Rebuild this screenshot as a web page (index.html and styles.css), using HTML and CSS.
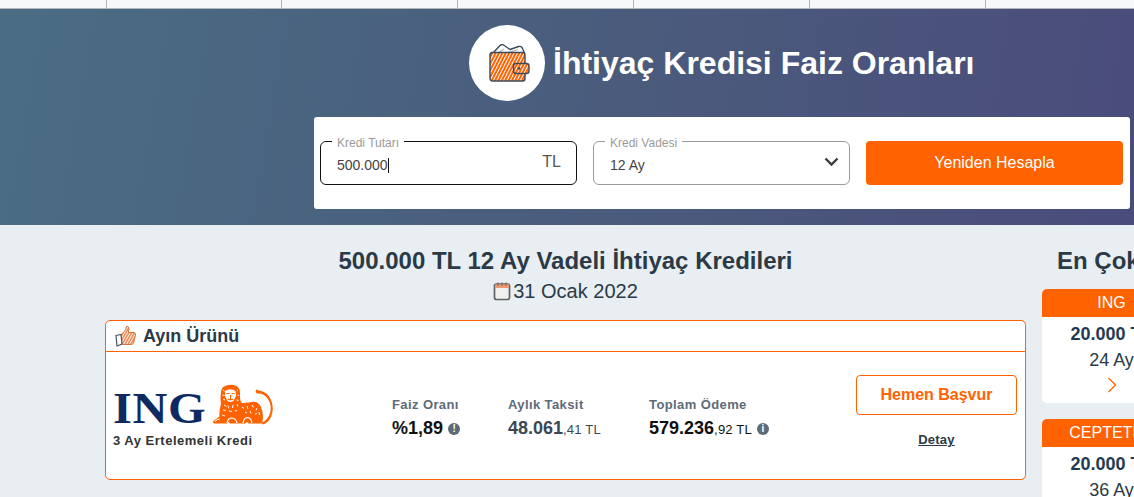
FILE: index.html
```html
<!DOCTYPE html>
<html lang="tr">
<head>
<meta charset="utf-8">
<title>İhtiyaç Kredisi Faiz Oranları</title>
<link rel="stylesheet" href="styles.css">
</head>
<body>
<nav class="topnav">
  <div class="nav-first"></div>
  <div class="nav-cell"></div>
  <div class="nav-cell"></div>
  <div class="nav-cell"></div>
  <div class="nav-cell"></div>
  <div class="nav-cell"></div>
  <div class="nav-cell"></div>
</nav>
<header class="hero">
  <div class="hero-title">
    <div class="hero-circle">
      <svg width="41" height="38" viewBox="0 0 41 38">
        <defs>
          <pattern id="stripes" width="3" height="3" patternUnits="userSpaceOnUse" patternTransform="rotate(27)">
            <rect width="3" height="3" fill="#fff"/>
            <rect width="2" height="3" fill="#ff6200"/>
          </pattern>
        </defs>
        <path d="M4 9 11 1.500q2-1.500 3.500-.5L21 5.500 29.500 2.500q2.500-.5 3.500 1L35.500 9Z" fill="#fff" stroke="#3e4a55" stroke-width="1.400" stroke-linejoin="round"/>
        <path d="M9 9 15 5M18 9 29 5.500" fill="none" stroke="#aeb6bc" stroke-width="1.200"/>
        <rect x="1" y="8.500" width="35" height="28.500" rx="2.500" fill="url(#stripes)" stroke="#3e4a55" stroke-width="1.400"/>
        <rect x="24.500" y="19.500" width="15.500" height="10" rx="2.500" fill="url(#stripes)" stroke="#3e4a55" stroke-width="1.400"/>
        <circle cx="30" cy="24.500" r="1.300" fill="#3e4a55"/>
      </svg>
    </div>
    <h1 class="hero-heading">İhtiyaç Kredisi Faiz Oranları</h1>
  </div>
  <form class="calc">
    <fieldset class="field field-active">
      <legend class="field-legend">Kredi Tutarı</legend>
      <span class="field-value">500.000<i class="caret"></i></span>
      <span class="field-unit">TL</span>
    </fieldset>
    <fieldset class="field">
      <legend class="field-legend">Kredi Vadesi</legend>
      <span class="field-value">12 Ay</span>
      <svg class="chevron" width="15" height="10" viewBox="0 0 15 10"><path d="M1.500 1.500 7.500 7.500l6-6" fill="none" stroke="#3d3d3d" stroke-width="2.400"/></svg>
    </fieldset>
    <button class="calc-btn" type="button">Yeniden Hesapla</button>
  </form>
</header>
<div class="content">
  <main class="main">
    <h2 class="page-title">500.000 TL 12 Ay Vadeli İhtiyaç Kredileri</h2>
    <div class="page-date">
      <svg width="18" height="20" viewBox="0 0 18 20"><rect x="1.500" y="3" width="15" height="15.500" rx="2" fill="#f0f0ee" stroke="#5f6468" stroke-width="1.700"/><rect x="2" y="3.500" width="14" height="3.500" fill="#ef9a70"/><path d="M5 1.500v3.500M9 1.500v3.500M13 1.500v3.500" stroke="#8a6a5a" stroke-width="1.200"/></svg>
      <span>31 Ocak 2022</span>
    </div>
    <section class="product">
      <div class="product-head">
        <svg width="21" height="22" viewBox="0 0 21 22">
          <defs><pattern id="stripes2" width="2.500" height="2.500" patternUnits="userSpaceOnUse" patternTransform="rotate(30)"><rect width="2.500" height="2.500" fill="#fff"/><rect width="1.600" height="2.500" fill="#f0884f"/></pattern></defs>
          <path d="M6 10 10.500 5 11.500 1.500q2.500-.5 2.500 2.500l-.8 3.500H19q2 .5 1.500 2.500L18.500 18q-.5 1.500-2.500 1.500H8L6 18Z" fill="url(#stripes2)" stroke="#d9743c" stroke-width="1"/>
          <path d="M1 10.500 6 9.500 7 19 2 21Z" fill="#fff" stroke="#4a5560" stroke-width="1.200"/>
        </svg>
        <span>Ayın Ürünü</span>
      </div>
      <div class="product-body">
        <div class="brand">
          <div class="brand-logo">
            <span class="brand-name">ING</span>
            <svg class="lion" width="62" height="42" viewBox="0 0 62 42">
              <path d="M9 9Q9 4 12 2.500 18-.5 24.500 2 28 4 28 9L28 14Q28 17 30 19L37 18.500Q45 16 48.500 22 51 27 51 33 51 37 49.500 39.500H36.500L35 38 33 39.500H18L16.500 38 15 39.500H2Q0 38 2 36.500L7.500 32.500Q7 26 9 20 8 14 9 9Z" fill="#ff6200"/>
              <path d="M44.500 5.500 47 6.500 49 7Q55 8 58.500 15 61.500 21 60.500 28 59 36 53.500 39.500L50 40.500 49.500 38.500 52 37.500Q57 34 58.500 27.500 59.500 21 56.500 16 53.500 10.500 48 9.500L45 9.500 43.500 8Z" fill="#ff6200"/>
              <path d="M13 7Q18 3.500 23.500 7L24 12 21.500 17Q18.500 19 15.500 17L13 12Z" fill="#fff"/>
              <path d="M14.500 9.500h3M19.500 9.500h3M18.500 11v3M16 15q2.500 1.500 5 0M18.500 14v2" fill="none" stroke="#ff6200" stroke-width="1.100"/>
              <path d="M11 6l1.500 1M10.500 11l2 .5M11 15l2 1M25 6l1 .5M25.500 11l1.500.5M24.500 16l2 .5M12 21l2.500 1.500M16 21.500l1 3M21 21l-.5 3M25 20l1 2.500M11 26l3 .5M17 27l3 .5M23 27l2-.5M10 31l3 1M30 23l2 1.500M35 22l1 3M40 21l1.500 2.500M45 24l-1 2.500M33 28l2 1M38 27l1 2.500M43 30l2-.5M47 28l.5 3" fill="none" stroke="#fff" stroke-width="1"/>
              <path d="M3 37.500q2-2.500 5-2.500M15 39q1-5 5-5 4 .5 5 5M31 39q1-5 4-5.500 4 0 5 5.500" fill="none" stroke="#fff" stroke-width="1.200"/>
            </svg>
          </div>
          <div class="brand-note">3 Ay Ertelemeli Kredi</div>
        </div>
        <div class="stat stat-rate">
          <div class="stat-label">Faiz Oranı</div>
          <div class="stat-value">%1,89 <i class="info">!</i></div>
        </div>
        <div class="stat stat-monthly">
          <div class="stat-label">Aylık Taksit</div>
          <div class="stat-value stat-value-muted">48.061<small>,41 TL</small></div>
        </div>
        <div class="stat stat-total">
          <div class="stat-label">Toplam Ödeme</div>
          <div class="stat-value">579.236<small>,92 TL</small> <i class="info">i</i></div>
        </div>
        <div class="actions">
          <button class="apply" type="button">Hemen Başvur</button>
          <a class="detail" href="#">Detay</a>
        </div>
      </div>
    </section>
  </main>
  <aside class="side">
    <h2 class="side-title">En Çok Tercih Edilenler</h2>
    <div class="mini">
      <div class="mini-head">ING</div>
      <div class="mini-amount">20.000 TL</div>
      <div class="mini-term">24 Ay</div>
      <svg class="mini-arrow" width="10" height="16" viewBox="0 0 10 16"><path d="M1.500 1 8.500 8l-7 7" fill="none" stroke="#ff6200" stroke-width="1.300"/></svg>
    </div>
    <div class="mini">
      <div class="mini-head">CEPTETEB</div>
      <div class="mini-amount">20.000 TL</div>
      <div class="mini-term">36 Ay</div>
    </div>
  </aside>
</div>
</body>
</html>
```
FILE: styles.css
```css
* { box-sizing: border-box; }
html, body { height: 497px; overflow: hidden; }
body {
  margin: 0;
  width: 1134px;
  background: #e9eef3;
  font-family: "Liberation Sans", Arial, sans-serif;
  color: #2b3a46;
}
.topnav {
  display: flex;
  height: 9px;
  background: #f7f8fa;
  border-bottom: 1px solid #b4b6b8;
}
.nav-first { width: 105.6px; flex: none; }
.nav-cell { width: 175.8px; flex: none; border-left: 1px solid #b4b6b8; }
.hero {
  height: 216px;
  padding-top: 16px;
  background: linear-gradient(100deg, #4a6d84 0%, #4a5b7c 55%, #4a4c7b 100%);
}
.hero-title {
  display: flex;
  align-items: center;
  gap: 8px;
  margin-left: 469px;
  height: 76px;
}
.hero-circle {
  width: 76px;
  height: 76px;
  border-radius: 50%;
  background: #fff;
  display: flex;
  align-items: center;
  justify-content: center;
  padding-left: 5px;
}
.hero-heading {
  margin: 0;
  font-size: 32px;
  font-weight: 700;
  color: #fff;
  white-space: nowrap;
}
.calc {
  display: flex;
  align-items: flex-start;
  margin: 16px 4px 0 314px;
  height: 92px;
  padding: 16px 7px 0 6px;
  background: #fff;
  border-radius: 3px;
  gap: 16px;
}
.field {
  margin: 0;
  width: 257px;
  height: 52px;
  padding: 0 16px;
  border: 1px solid #9a9a9a;
  border-radius: 6px;
  display: flex;
  align-items: center;
  font-size: 14px;
  color: #444;
}
.field-active { border-color: #111; }
.field-legend {
  padding: 4px 5px 0;
  margin-left: -5px;
  font-size: 12px;
  line-height: 12px;
  color: #9a9a9a;
}
.field-value { margin-top: -4px; flex: 1; color: #444; }
.caret { display: inline-block; width: 1px; height: 15px; background: #111; vertical-align: -3px; }
.field-unit { margin-top: -10px; margin-right: -1px; font-size: 16px; color: #555; }
.chevron { margin-top: -10px; margin-right: -6px; }
.calc-btn {
  width: 257px;
  height: 44px;
  margin-top: 8px;
  border: 0;
  border-radius: 4px;
  background: #ff6200;
  color: #fff;
  font-family: inherit;
  font-size: 16px;
}
.content {
  display: flex;
  gap: 16px;
  padding-left: 105px;
}
.main { width: 921px; flex: none; }
.page-title {
  margin: 22px 0 0;
  text-align: center;
  font-size: 24px;
  line-height: 28px;
  font-weight: 700;
  color: #2b3a46;
}
.page-date {
  display: flex;
  justify-content: center;
  align-items: center;
  gap: 2px;
  margin-top: 3px;
  font-size: 20px;
  line-height: 26px;
  color: #2b3a46;
}
.product {
  margin-top: 16px;
  height: 160px;
  background: #fff;
  border: 1px solid #ff6200;
  border-radius: 5px;
}
.product-head {
  display: flex;
  align-items: center;
  gap: 7px;
  height: 31px;
  padding-left: 9px;
  border-bottom: 1px solid #ff6200;
  font-size: 18px;
  font-weight: 700;
}
.product-body {
  display: flex;
  height: 127px;
}
.brand { width: 278px; padding: 32px 0 0 7px; flex: none; }
.brand-logo { display: flex; align-items: flex-end; height: 42px; gap: 14px; }
.brand-name {
  display: block;
  font-family: "Liberation Serif", serif;
  font-size: 44px;
  line-height: 35px;
  letter-spacing: .5px;
  font-weight: 700;
  color: #0e2a63;
  transform: scaleX(1.1);
  transform-origin: left center;
}
.brand-note { margin-top: 7px; font-size: 13px; line-height: 15px; font-weight: 700; color: #333; letter-spacing: .5px; }
.stat { flex: none; padding-top: 45px; }
.stat-rate { width: 116px; margin-left: 8px; }
.stat-monthly { width: 141px; }
.stat-total { width: 207px; }
.stat-label { font-size: 13px; line-height: 16px; font-weight: 700; color: #5d6b78; letter-spacing: .4px; }
.stat-value { margin-top: 5px; font-size: 18px; line-height: 20px; font-weight: 700; color: #111; white-space: nowrap; }
.stat-value-muted { color: #3a4754; }
.stat-value small { font-size: 13px; font-weight: 400; letter-spacing: .2px; }
.info {
  display: inline-block;
  width: 12px;
  height: 12px;
  border-radius: 50%;
  background: #5d6b78;
  color: #fff;
  font-size: 10px;
  line-height: 12px;
  font-style: normal;
  font-weight: 700;
  text-align: center;
  vertical-align: 2px;
}
.actions {
  display: flex;
  flex-direction: column;
  align-items: center;
  width: 161px;
  padding-top: 23px;
}
.apply {
  width: 161px;
  height: 40px;
  border: 1px solid #ff6200;
  border-radius: 4px;
  background: #fff;
  color: #ff6200;
  font-family: inherit;
  font-size: 16px;
  font-weight: 700;
}
.detail { margin-top: 17px; font-size: 13px; line-height: 16px; font-weight: 700; letter-spacing: .2px; color: #2b3a46; }
.side { width: 139px; flex: none; }
.side-title {
  margin: 22px 0 0 15px;
  font-size: 24px;
  line-height: 28px;
  font-weight: 700;
  white-space: nowrap;
  color: #2b3a46;
}
.mini {
  margin-top: 14px;
  height: 114px;
  background: #fff;
  border-radius: 5px;
  text-align: center;
  overflow: hidden;
}
.mini + .mini { margin-top: 16px; }
.mini-head {
  height: 28px;
  background: #ff6200;
  color: #fff;
  font-size: 16px;
  line-height: 28px;
}
.mini-amount { margin-top: 7px; font-size: 18px; line-height: 20px; font-weight: 700; color: #1f3a52; white-space: nowrap; }
.mini-term { margin-top: 6px; font-size: 18px; line-height: 20px; color: #2b3a46; }
.mini-arrow { display: block; margin: 7px auto 0; }
```
